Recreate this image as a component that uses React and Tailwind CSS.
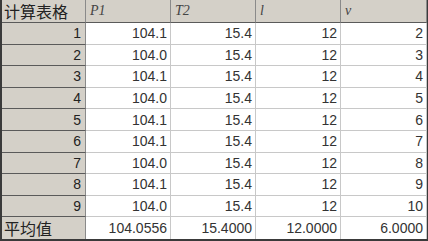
import React from 'react';

const p1 = ['104.1', '104.0', '104.1', '104.0', '104.1', '104.1', '104.0', '104.1', '104.0'];
const rows = p1.map((p, i) => ({ n: i + 1, p1: p, t2: '15.4', l: '12', v: String(i + 2) }));
const heads = ['P1', 'T2', 'l', 'v'];

export default function App() {
  const cell = 'flex items-center justify-end pr-[3px] bg-white text-[#333] border-r border-b border-[#c8c8c8]';
  const side = 'flex items-center bg-[#d4d0c8] text-[#222] border-r border-r-[#8a8a8a] border-b border-b-[#5a5a5a]';

  return (
    <div
      className="w-[428px] h-[241px] bg-white border-l-2 border-b-2 border-r border-[#3a3a3a] grid grid-cols-[84px_85px_85px_85px_1fr] grid-rows-[23px_repeat(10,1fr)] text-[14px] leading-none overflow-hidden"
      style={{ fontFamily: '"Liberation Sans", Arial, sans-serif' }}
    >
      {/* header row */}
      <div className={`${side} pl-[2px] text-[16px] text-[#111]`} style={{ fontFamily: '"Noto Sans CJK SC", sans-serif' }}>
        计算表格
      </div>
      {heads.map((h) => (
        <div
          key={h}
          className="flex items-center pl-[4px] bg-[#d4d0c8] text-[#444] italic text-[14px] border-r border-r-[#8a8a8a] border-b border-b-[#5a5a5a]"
          style={{ fontFamily: '"Liberation Serif", "Times New Roman", serif' }}
        >
          {h}
        </div>
      ))}

      {rows.map((r) => (
        <React.Fragment key={r.n}>
          <div className={`${side} justify-end pr-[4px]`}>{r.n}</div>
          <div className={cell}>{r.p1}</div>
          <div className={cell}>{r.t2}</div>
          <div className={cell}>{r.l}</div>
          <div className={cell}>{r.v}</div>
        </React.Fragment>
      ))}

      {/* average row */}
      <div className={`${side} pl-[2px] text-[16px] text-[#111] border-b-0`} style={{ fontFamily: '"Noto Sans CJK SC", sans-serif' }}>
        平均值
      </div>
      <div className={`${cell} border-b-0`}>104.0556</div>
      <div className={`${cell} border-b-0`}>15.4000</div>
      <div className={`${cell} border-b-0`}>12.0000</div>
      <div className={`${cell} border-b-0`}>6.0000</div>
    </div>
  );
}
